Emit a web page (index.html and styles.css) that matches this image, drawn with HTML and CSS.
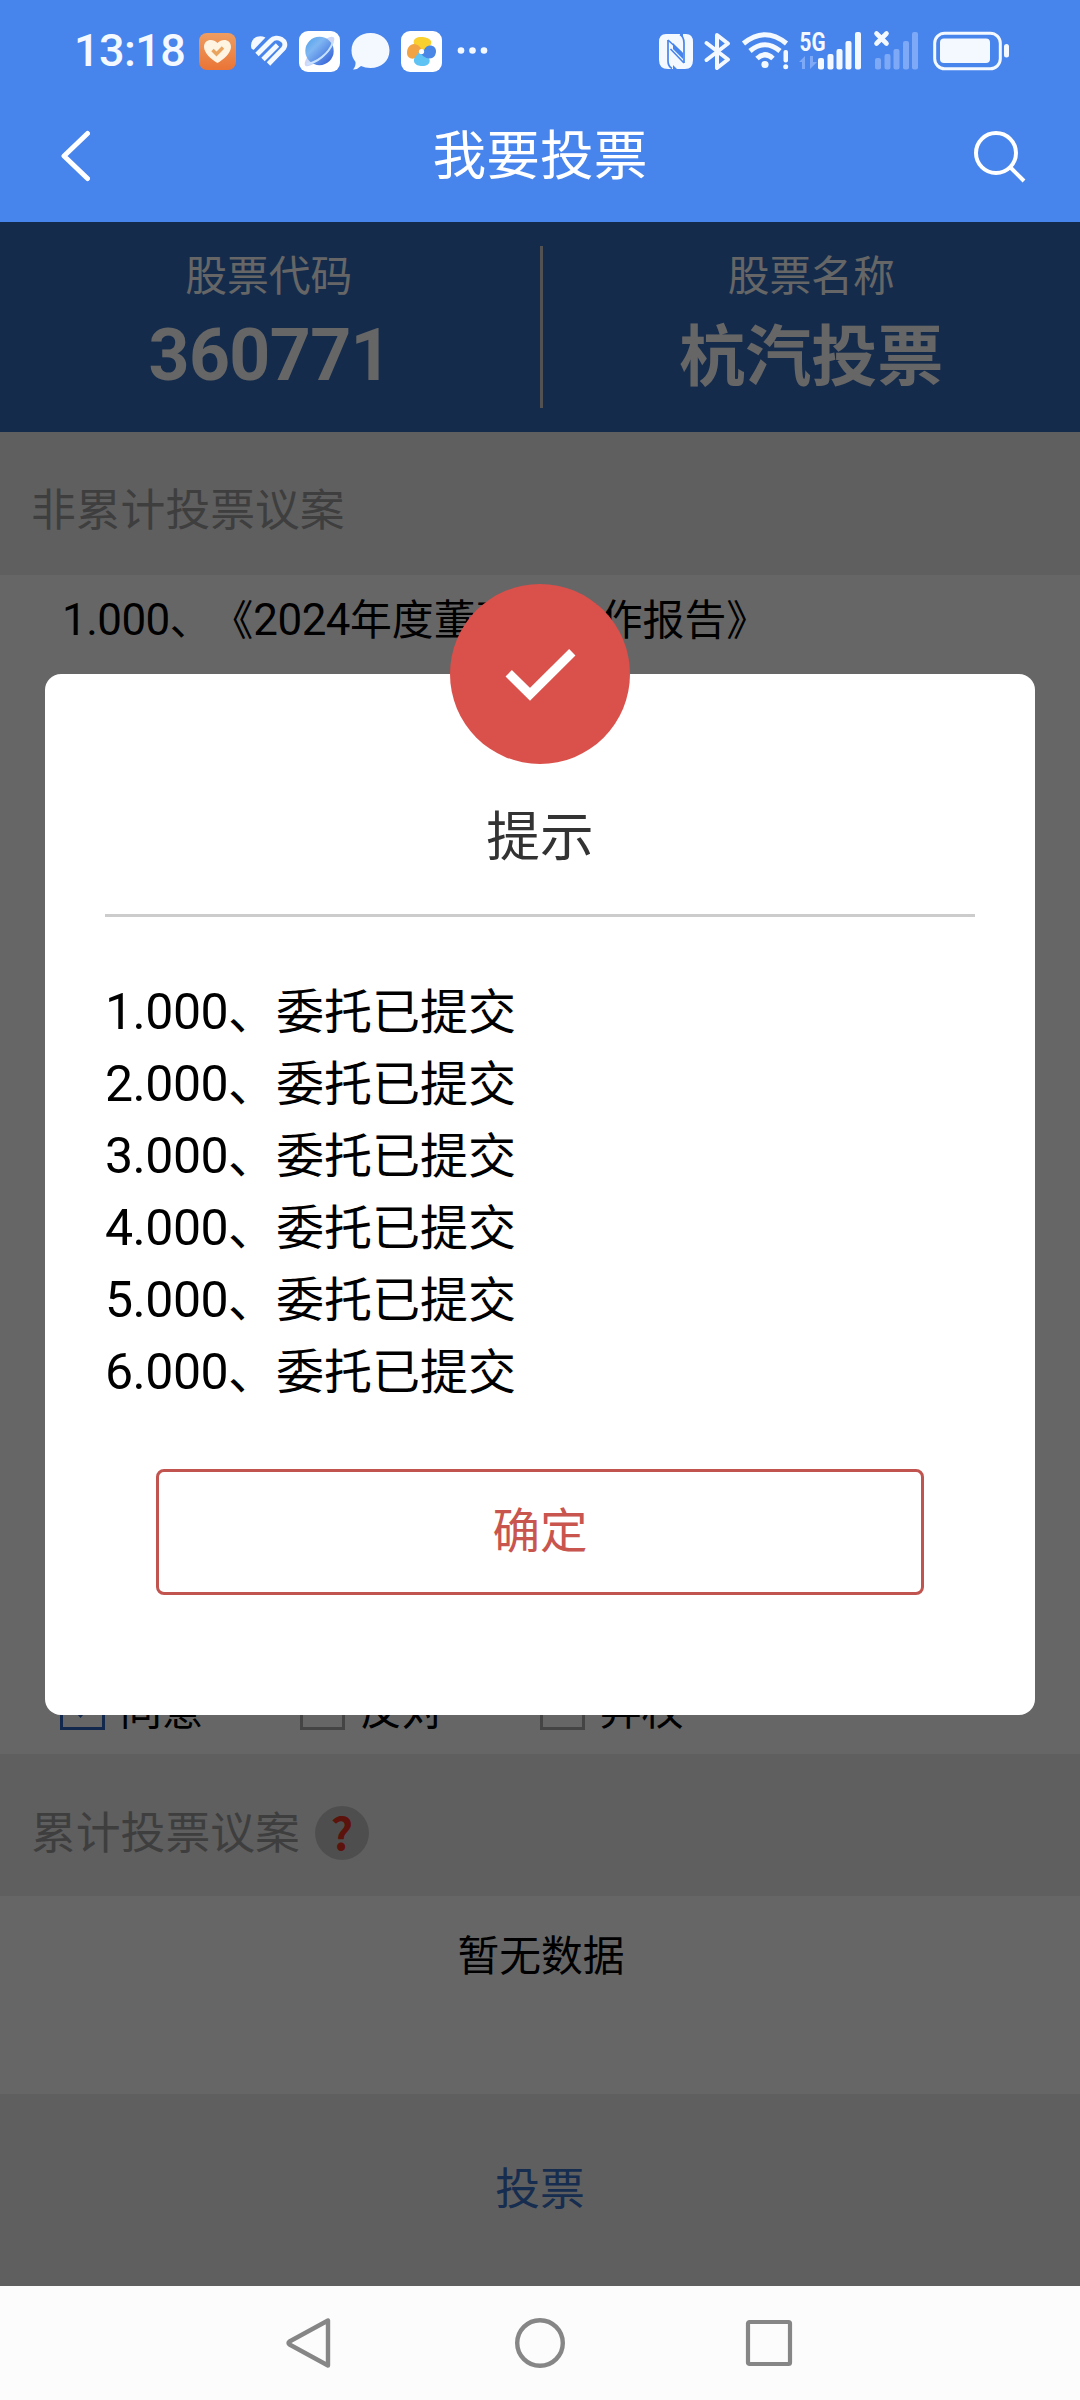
FILE: index.html
```html
<!DOCTYPE html>
<html lang="zh-CN">
<head>
<meta charset="utf-8">
<title>我要投票</title>
<link rel="stylesheet" href="styles.css">
</head>
<body>
<div class="screen">
  <header class="top">
    <div class="status">
      <span class="clock">13:18</span>
      <svg class="status-left" width="300" height="60" viewBox="190 20 300 60">
        <defs>
          <linearGradient id="org" x1="0" y1="0" x2="0" y2="1"><stop offset="0" stop-color="#ee9d62"/><stop offset="1" stop-color="#ea7436"/></linearGradient>
          <linearGradient id="globe" x1="0" y1="0" x2="1" y2="1"><stop offset="0" stop-color="#4aa0ea"/><stop offset=".35" stop-color="#7fb6f2"/><stop offset="1" stop-color="#2a56d4"/></linearGradient>
        </defs>
        <rect x="199" y="33" width="37" height="37" rx="8" fill="url(#org)"/>
        <path d="M217.500 63C212 60 204 53 204 47C204 39 213 38 217.500 43C222 38 231 39 231 47C231 53 223 60 217.500 63Z" fill="#fff4e2"/>
        <path d="M212.500 50L216.500 54L223 47.500" fill="none" stroke="#e9a45f" stroke-width="3.400"/>
        <path d="M251.500 48.500C249 40 257 33.500 265.500 37.500L253.500 50Z" fill="#f4f9ff"/>
        <g fill="none" stroke="#f4f9ff" stroke-width="4.800">
          <path d="M257 54.500L270.500 41C277 34 289 41 283.500 48.500L268.500 64"/>
          <path d="M263 59.500L277.500 45"/>
        </g>
        <rect x="299" y="31" width="41" height="41" rx="9" fill="#fff"/>
        <ellipse cx="319.500" cy="51.500" rx="20" ry="6" transform="rotate(-45 319.500 51.500)" fill="#cdd7f6"/>
        <circle cx="319.500" cy="51" r="14.200" fill="url(#globe)"/>
        <path d="M307 64C316 63 329 54 333 42" fill="none" stroke="#c8e2ff" stroke-width="2"/>
        <path d="M370.500 33C381 33 389.500 40 389.500 50.500C389.500 61 381 68 370.500 68Q365 68 361 66Q357 70 353 69.500Q356 66 355.500 62Q351.500 57 351.500 50.500C351.500 40 360 33 370.500 33Z" fill="#f4f9ff"/>
        <rect x="401" y="31" width="41" height="41" rx="9" fill="#fff"/>
        <path d="M420 49C411 45 412 37 421 37C430 37 435 42 428 48L423 52Z" fill="#f9d02e"/>
        <path d="M419 53C417 61 407 60 407 53C407 45 414 41 420 47L423 51Z" fill="#f2a444"/>
        <path d="M422 54C432 56 432 65 424 66C416 67 410 61 417 55L420 51Z" fill="#5fc4f4"/>
        <path d="M424 50C427 43 436 45 436 51C436 58 430 61 423 56L420 52Z" fill="#4a86e6"/>
        <circle cx="421.500" cy="51.500" r="2.600" fill="#fff"/>
        <g fill="#f4f9ff"><circle cx="461" cy="50.500" r="3.300"/><circle cx="472.500" cy="50.500" r="3.300"/><circle cx="484" cy="50.500" r="3.300"/></g>
      </svg>
      <svg class="status-right" width="360" height="60" viewBox="655 20 360 60">
        <g fill="#f4f9ff">
          <path d="M666 34H680L687 42V57L673 43V69H668Q659 69 659 60V42Q659 34 666 34Z"/>
          <path d="M683 34H686Q693 34 693 42V60Q693 69 685 69H677L670 62V46L683 59Z"/>
          <path d="M668 40V61Q668 66 672 68.500M684 63V43Q684 37 680 34.500" fill="none" stroke="#4784ec" stroke-width="1.700"/>
          <path d="M668 40L682 53M670.500 49L684 63" stroke="#4784ec" stroke-width="1.600"/>
          <path d="M706.500 43L728 59.500L717 68V35L728 43.500L706.500 60" fill="none" stroke="#f4f9ff" stroke-width="4" stroke-linejoin="round" stroke-linecap="round"/>
          <g fill="none" stroke="#f4f9ff" stroke-width="5"><path d="M743.500 43.500Q765 26 786.500 43.500"/><path d="M750 51Q765 38.500 780 51"/><path d="M757 58.500Q765 51 773 58.500"/></g>
          <circle cx="765" cy="64.500" r="3.600"/>
          <rect x="783.500" y="50" width="4.500" height="12.500" rx="2"/><circle cx="785.700" cy="66.800" r="2.500"/>
          <rect x="818" y="58" width="6" height="11.500" rx="2"/><rect x="827.500" y="54" width="6" height="15.500" rx="2"/><rect x="836.500" y="49" width="6" height="20.500" rx="2"/><rect x="845.500" y="41" width="6" height="28.500" rx="2"/><rect x="855" y="32" width="6" height="37.500" rx="2"/>
        </g>
        <text class="net" x="799.500" y="51" textLength="26" lengthAdjust="spacingAndGlyphs">5G</text>
        <path d="M799 62L805 56V69H802V62ZM810 56V69L817 62H813V56Z" fill="#7ea9f6"/>
        <path d="M876.500 33.500L886.500 43.500M886.500 33.500L876.500 43.500" stroke="#f4f9ff" stroke-width="4.600" stroke-linecap="round"/>
        <g fill="#7ea9f6"><rect x="875" y="58" width="6" height="11.500" rx="2"/><rect x="884.500" y="54" width="6" height="15.500" rx="2"/><rect x="893.500" y="49" width="6" height="20.500" rx="2"/><rect x="903" y="41" width="6" height="28.500" rx="2"/><rect x="912" y="32" width="6" height="37.500" rx="2"/></g>
        <rect x="934.700" y="33.200" width="65.600" height="35.600" rx="10" fill="none" stroke="#f4f9ff" stroke-width="3"/>
        <rect x="940" y="38.500" width="50" height="24.500" rx="4" fill="#f4f9ff"/>
        <rect x="1004" y="44" width="5" height="13.500" rx="2.500" fill="#f4f9ff"/>
      </svg>
    </div>
    <div class="navbar">
      <svg width="34" height="56" viewBox="0 0 34 56"><path d="M31.500 5.500L8 28L31.500 50.500" fill="none" stroke="#fff" stroke-width="5" stroke-linecap="round" stroke-linejoin="round"/></svg>
      <h1 class="title">我要投票</h1>
      <svg width="54" height="54" viewBox="0 0 54 54"><circle cx="24" cy="24" r="20" fill="none" stroke="#fff" stroke-width="4"/><path d="M38 38L52 52" stroke="#fff" stroke-width="4"/></svg>
    </div>
  </header>

  <main class="page">
    <section class="stock">
      <div class="cell"><span class="label">股票代码</span><strong class="value code">360771</strong></div>
      <div class="rule"></div>
      <div class="cell"><span class="label">股票名称</span><strong class="value">杭汽投票</strong></div>
    </section>
    <h2 class="section">非累计投票议案</h2>
    <section class="motions">
      <p class="motion"><span class="num">1.000</span>、《<span class="num">2024</span>年度董事会工作报告》</p>
      <div class="options">
        <label class="option on"><span class="box"><svg width="39" height="39" viewBox="0 0 39 39"><path d="M8 16L17.500 27L32 10" fill="none" stroke="#2f68c0" stroke-width="4"/></svg></span>同意</label>
        <label class="option"><span class="box"></span>反对</label>
        <label class="option"><span class="box"></span>弃权</label>
      </div>
    </section>
    <h2 class="section second">累计投票议案<span class="help">?</span></h2>
    <p class="empty">暂无数据</p>
    <div class="submit">投票</div>

    <div class="mask">
      <div class="dialog">
        <div class="badge"><svg width="180" height="180" viewBox="0 0 180 180"><path d="M58.700 89.300L80 110.300L122.300 68.300" fill="none" stroke="#fff" stroke-width="9"/></svg></div>
        <h3 class="dialog-title">提示</h3>
        <ul class="results">
          <li><span class="num">1.000</span>、委托已提交</li>
          <li><span class="num">2.000</span>、委托已提交</li>
          <li><span class="num">3.000</span>、委托已提交</li>
          <li><span class="num">4.000</span>、委托已提交</li>
          <li><span class="num">5.000</span>、委托已提交</li>
          <li><span class="num">6.000</span>、委托已提交</li>
        </ul>
        <button class="ok">确定</button>
      </div>
    </div>
  </main>

  <footer class="keys">
    <svg width="54" height="54" viewBox="0 0 54 54"><path d="M44 4.500V49.500L5.500 28.500Q3.500 27 5.500 25.500Z" fill="none" stroke="#868686" stroke-width="4.400" stroke-linejoin="round"/></svg>
    <svg width="54" height="54" viewBox="0 0 54 54"><circle cx="27" cy="27" r="22.800" fill="none" stroke="#868686" stroke-width="4.400"/></svg>
    <svg width="54" height="54" viewBox="0 0 54 54"><rect x="6" y="6" width="42" height="42" rx="1.500" fill="none" stroke="#868686" stroke-width="4.200"/></svg>
  </footer>
</div>
</body>
</html>
```
FILE: styles.css
```css
* { box-sizing: border-box; margin: 0; padding: 0; }
body { font-family: "Noto Sans CJK SC", sans-serif; color: #000; background: #fff; text-spacing-trim: space-all; }
svg { display: block; }
.screen { width: 1080px; height: 2400px; display: flex; flex-direction: column; overflow: hidden; }

.top { height: 222px; background: #4784ec; color: #fff; }
.status { height: 100px; display: flex; align-items: center; padding: 0 65px 0 74px; }
.clock { width: 116px; padding-top: 2px; font: 500 45px/60px Roboto, sans-serif; letter-spacing: -.6px; color: #f4f9ff; white-space: nowrap; }
.status-right { margin-left: auto; }
.net { font: 700 25px Roboto, sans-serif; fill: #f4f9ff; }
.navbar { height: 112px; display: flex; align-items: center; justify-content: space-between; padding: 0 54px 0 56px; }
.title { font-size: 53.7px; font-weight: 400; line-height: 80px; margin: -9px 0 0 18px; }

.page { position: relative; height: 2064px; display: flex; flex-direction: column; background: #fff; }
.stock { height: 210px; display: flex; align-items: center; background: #326bbc; color: #fff; }
.cell { flex: 1; height: 210px; padding-top: 21px; display: flex; flex-direction: column; align-items: center; }
.label { font-size: 41.8px; line-height: 60px; }
.value { font-size: 66px; line-height: 97px; font-weight: 700; }
.code { padding-left: 2px; font-family: Roboto, sans-serif; font-size: 71.5px; line-height: 105px; letter-spacing: -.6px; }
.rule { width: 3px; height: 162px; margin-left: 2px; background: #ccc; }
.section { height: 143px; padding: 5px 0 0 31px; background: #eee; color: #9c9c9c; font-size: 44.8px; font-weight: 400; line-height: 139px; }
.motions { height: 1179px; padding: 10px 0 24px 60px; display: flex; flex-direction: column; justify-content: space-between; font-size: 41.8px; }
.motion { padding-left: 2px; line-height: 64px; }
.num { font-family: Roboto, sans-serif; letter-spacing: -.5px; line-height: 1; }
.motion .num { font-size: 43.9px; }
.options { display: flex; }
.option { width: 240px; display: flex; align-items: center; gap: 15px; line-height: 45px; }
.box { width: 45px; height: 45px; border: 3px solid #aaa; }
.on .box { border-color: #2f68c0; }
.second { height: 142px; padding-top: 10px; line-height: 132px; display: flex; align-items: center; }
.help { width: 54px; height: 54px; margin: 5px 0 0 15px; border-radius: 50%; background: #c4c4c4; color: #e6301c; font: 700 44px/50px "Noto Sans CJK SC", sans-serif; text-align: center; }
.empty { height: 198px; padding: 27px 0 0 2px; text-align: center; font-size: 41.8px; line-height: 60px; }
.submit { height: 192px; background: #eee; color: #3a70c6; text-align: center; font-size: 44.8px; line-height: 184px; }

.mask { position: absolute; inset: 0; padding: 452px 45px 0; background: rgba(0, 0, 0, .6); }
.dialog { position: relative; height: 1041px; padding: 120px 60px 0; border-radius: 16px; background: #fff; }
.badge { position: absolute; left: 405px; top: -90px; width: 180px; height: 180px; border-radius: 50%; background: #da504b; }
.dialog-title { height: 123px; border-bottom: 3px solid #ccc; text-align: center; color: #333; font-size: 53.7px; font-weight: 400; line-height: 78px; }
.results { list-style: none; margin-top: 55px; font-size: 48px; line-height: 72px; }
.results .num { font-size: 50px; }
.ok { display: block; width: 768px; height: 126px; margin: 65px auto 0; padding-bottom: 9px; border: 3px solid #c2544f; border-radius: 8px; background: #fff; color: #c9554f; font: 47.5px "Noto Sans CJK SC", sans-serif; }

.keys { height: 114px; display: flex; align-items: center; justify-content: center; gap: 175px; background: #fcfcfc; }
```
